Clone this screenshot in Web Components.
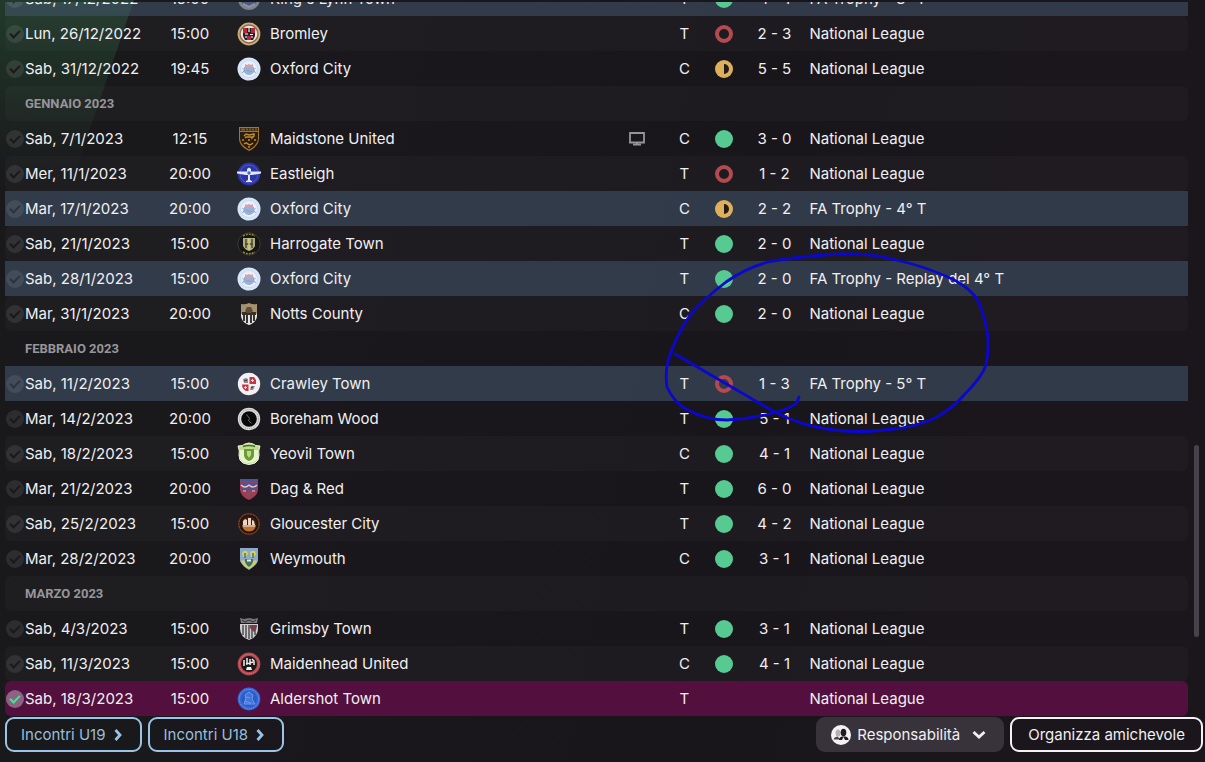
<!DOCTYPE html>
<html lang="it">
<head>
<meta charset="utf-8">
<meta name="viewport" content="width=device-width, initial-scale=1">
<title>Calendario</title>
<style>
html, body { height: 100%; }
body {
	margin: 0;
	background: #19171a;
	color: #f1eff1;
	font: 15px/20px Inter, "Liberation Sans", sans-serif;
}
</style>
</head>
<body>
<fixture-page>
	<fixture-list></fixture-list>
	<action-button slot="left" kind="link">Incontri U19</action-button>
	<action-button slot="left" kind="link">Incontri U18</action-button>
	<action-button slot="right" kind="menu">Responsabilità</action-button>
	<action-button slot="right" kind="outline">Organizza amichevole</action-button>
	<pen-note slot="note"></pen-note>
</fixture-page>

<script>
// date, time, club, badge, tv, venue, result, score, competition, row class
const FIXTURES = [
	["Sab, 17/12/2022", "15:00", "King's Lynn Town", "kings", 0, "T", "win", "4 - 1", "FA Trophy - 3° T", "cup"],
	["Lun, 26/12/2022", "15:00", "Bromley", "bromley", 0, "T", "loss", "2 - 3", "National League"],
	["Sab, 31/12/2022", "19:45", "Oxford City", "oxford", 0, "C", "draw", "5 - 5", "National League"],
	"GENNAIO 2023",
	["Sab, 7/1/2023", "12:15", "Maidstone United", "maidstone", 1, "C", "win", "3 - 0", "National League"],
	["Mer, 11/1/2023", "20:00", "Eastleigh", "eastleigh", 0, "T", "loss", "1 - 2", "National League"],
	["Mar, 17/1/2023", "20:00", "Oxford City", "oxford", 0, "C", "draw", "2 - 2", "FA Trophy - 4° T", "cup"],
	["Sab, 21/1/2023", "15:00", "Harrogate Town", "harrogate", 0, "T", "win", "2 - 0", "National League"],
	["Sab, 28/1/2023", "15:00", "Oxford City", "oxford", 0, "T", "win", "2 - 0", "FA Trophy - Replay del 4° T", "cup"],
	["Mar, 31/1/2023", "20:00", "Notts County", "notts", 0, "C", "win", "2 - 0", "National League"],
	"FEBBRAIO 2023",
	["Sab, 11/2/2023", "15:00", "Crawley Town", "crawley", 0, "T", "loss", "1 - 3", "FA Trophy - 5° T", "cup"],
	["Mar, 14/2/2023", "20:00", "Boreham Wood", "boreham", 0, "T", "win", "5 - 1", "National League"],
	["Sab, 18/2/2023", "15:00", "Yeovil Town", "yeovil", 0, "C", "win", "4 - 1", "National League"],
	["Mar, 21/2/2023", "20:00", "Dag & Red", "dagred", 0, "T", "win", "6 - 0", "National League"],
	["Sab, 25/2/2023", "15:00", "Gloucester City", "gloucester", 0, "T", "win", "4 - 2", "National League"],
	["Mar, 28/2/2023", "20:00", "Weymouth", "weymouth", 0, "C", "win", "3 - 1", "National League"],
	"MARZO 2023",
	["Sab, 4/3/2023", "15:00", "Grimsby Town", "grimsby", 0, "T", "win", "3 - 1", "National League"],
	["Sab, 11/3/2023", "15:00", "Maidenhead United", "maidenhead", 0, "C", "win", "4 - 1", "National League"],
	["Sab, 18/3/2023", "15:00", "Aldershot Town", "aldershot", 0, "T", "", "", "National League", "next"]
];

const SHIELD = "M3 2h18v10c0 5-4 9-9 11c-5-2-9-6-9-11z";

const BADGES = {
	kings: `<circle cx="12" cy="12" r="11" fill="#7d828f"/><circle cx="12" cy="12" r="8" fill="#4a5a86"/><path d="M6 17l6 3l6-3" stroke="#8f93a2" stroke-width="2" fill="none"/>`,
	bromley: `<circle cx="12" cy="12" r="11.400" fill="#cfae7c"/><circle cx="12" cy="12" r="9.700" fill="#8a6a4c"/><circle cx="12" cy="12" r="8.300" fill="#ece4e0"/><path d="M6 6h12v8l-2 4H8l-2-4z" fill="#2a2023"/><path d="M6 6h4v5H6zM14 6h4v5h-4zM10 14h4v4h-4z" fill="#b32838"/><path d="M11 7h2M12 8v2M8 12h3M13 12.500h3M8 15h2M14 15h2" stroke="#fff" stroke-width="1.200" fill="none"/>`,
	oxford: `<circle cx="12" cy="12" r="11.500" fill="#d9e6f8"/><circle cx="12" cy="12" r="8.600" fill="#e9f0fb" stroke="#c3d6ef" stroke-width=".8"/><path d="M7 10h10v5c-1 2-3 3-5 3s-4-1-5-3z" fill="#9bb1d3"/><path d="M8 7l2 1l2-1l2 1l2-1v4H8z" fill="#d3a1ae"/><path d="M5.500 11l2 2l-2 3M18.500 11l-2 2l2 3M9 14q1.500-1 3 0t3 0" stroke="#869fc6" fill="none"/>`,
	maidstone: `<path d="M2 0h20v11c0 6-4 10-10 13C6 21 2 17 2 11z" fill="#a97724"/><path d="M3 5h18v6c0 5-4 9-9 11.500C7 20 3 16 3 11z" fill="#281d10"/><path d="M3 1h18v3H3z" fill="#3b2a13"/><path d="M5 1.500v2M7 1.500v2M10 1.500v2M13 1.500v2M16 1.500v2M19 1.500v2" stroke="#c08a2b"/><path d="M7 9l2-2l3 1l5-1v2l-2 2v-1H9l-1 1M5 13h2M11 13h2M17 13h2M7 17q2-2 4 0t5-1M11 20h2" stroke="#c18b27" stroke-width="1.500" fill="none"/>`,
	eastleigh: `<circle cx="12" cy="12" r="11.400" fill="#2c35a8"/><circle cx="12" cy="12" r="9" fill="none" stroke="#5a62c8" stroke-width=".8"/><path d="M0 9.500h10V7l2-1.500L14 7v2.500h10v2l-9 1.500h-2v5l2 1v1H9v-1l2-1v-5H9l-9-1.500z" fill="#e3e8fa"/><circle cx="12" cy="11" r="1.700" fill="#4b68bd"/>`,
	harrogate: `<circle cx="12" cy="12" r="11.200" fill="#151611" stroke="#45463c" stroke-width=".8"/><path d="M6 4q6-3.500 12 0M6 20q6 3.500 12 0" stroke="#8a873b" stroke-width="1.500" stroke-dasharray="2 1" fill="none"/><path d="M6 6h12v8q-2 4-6 5q-4-1-6-5z" fill="#aeac8c"/><path d="M9 7v9M15 7v9M8 12h8" stroke="#4e4b2a" stroke-width="1.500"/><path d="M12 6v12" stroke="#d9cf5c" stroke-width="1.500"/>`,
	notts: `<path d="M4 2q4 1 8-1q4 2 8 1v10q0 8-8 11q-8-3-8-11z" fill="#a8926e"/><path d="M4 12h16v1q0 7-8 10q-8-3-8-10z" fill="#e6e3e0"/><path d="M7 13v6M10 13v8M14 13v8M17 13v6" stroke="#171717" stroke-width="1.700"/><path d="M5 10h14v3H5z" fill="#3a3028"/><path d="M8 9l2-4h4l2 4l-2 2h-4z" fill="#5e4d3a"/>`,
	crawley: `<circle cx="12" cy="12" r="11.200" fill="#f5f1f2"/><path d="M12.500 5H17l2 3v4h-6.500zM5 12.500h6.500V19H9q-4-2-4-6.500z" fill="#c43a48"/><path d="M6 7l3-1l2 1v4H7zM14 14h4l-2 4h-3z" fill="#8f8a92"/><path d="M14 8.500h3M15.500 7v3M7 15.500h3M8.500 14v3" stroke="#f3dfe2"/><path d="M7 9l3-1M14 16l2-1" stroke="#3b3540"/>`,
	boreham: `<circle cx="12" cy="12" r="11.200" fill="#dcdcdc"/><circle cx="12" cy="12" r="9.500" fill="none" stroke="#8f8f8f" stroke-dasharray="1 1"/><circle cx="12" cy="12" r="7.800" fill="#080809"/><path d="M9.500 7.500l3 4l-1 2l3 3" stroke="#6d6d6d" fill="none"/>`,
	yeovil: `<path d="M1 4q5 0 7-2q4-2 8 0q2 2 7 2q-2 5-1 9q0 6-4 8q-6 3-12 0q-4-2-4-8q1-4-1-9z" fill="#bddd8b" stroke="#eef5da"/><path d="M3 8h18v8q-2 5-9 5t-9-5z" fill="#eaf3cf"/><path d="M7 7h10v6q0 4-5 6q-5-2-5-6z" fill="#679c36"/><path d="M10 9h4v4l-2 3l-2-3z" fill="#c6d48c"/><path d="M6 4.500q6-2 12 0" stroke="#46722e" stroke-width="1.500" fill="none"/>`,
	dagred: `<path d="${SHIELD}" fill="#a33a50"/><path d="M3 3h18M4 6q4 4 8 0q4 4 8 0M4 10q4 5 8 1q4 4 8-1" stroke="#44599b" stroke-width="2" fill="none"/><path d="M4 8q4 4 8 0q4 4 8 0M6 14h3M15 14h3" stroke="#dfc6d2" stroke-width="1.200" fill="none"/><path d="M8 16l4-3l4 3l-4 6z" fill="#8a4a5c"/>`,
	gloucester: `<circle cx="12" cy="12" r="11" fill="#5c301b"/><circle cx="12" cy="12" r="10" fill="#27150f" stroke="#8a4d28" stroke-dasharray="2 1"/><circle cx="12" cy="12" r="7.500" fill="#3b1d14"/><path d="M5 13h14q-1 6.500-7 6.500T5 13z" fill="#c0702f"/><path d="M6 9l2-2l2 1v5H6zM11 6h3v7h-3zM15 8l2 1l1 4h-3z" fill="#ecd5c3"/><path d="M6 14h12" stroke="#f4ece4"/>`,
	weymouth: `<path d="M3 1h18v13q-2 5-9 9q-7-4-9-9z" fill="#8aa9c6"/><path d="M4 14q3-2 5 1q4-3 6 0q3-3 5-1q-2 5-8 8q-6-3-8-8z" fill="#d6cd62"/><path d="M5 6l2-2h3l1 3l-2 3H6zM13 6l1-2h4l1 3l-2 3h-3z" fill="#d6d062"/><path d="M8 6v5M16 6v5" stroke="#4c6c77" stroke-width="1.500"/><path d="M8 12h8v3q-1 3-4 5q-3-2-4-5z" fill="#3d7668"/><path d="M10 13.500h4" stroke="#eee" stroke-width="2"/>`,
	grimsby: `<path d="M3 1l4 1l5-1l5 1l4-1l-1 5H4z" fill="#77777c"/><path d="M5 3l3 2l4-2l4 2l3-2" stroke="#313136" fill="none"/><path d="M3 7h18v4q0 9-9 12q-9-3-9-12z" fill="#cfced0"/><path d="M6 8v10M9 8v13M12 8v14M15 8v13M18 8v10" stroke="#3b3b41" stroke-width="1.300"/><path d="M13 8h7q0 5-3 7l-4-4z" fill="#74404a"/>`,
	maidenhead: `<circle cx="12" cy="12" r="11.400" fill="#b44750"/><circle cx="12" cy="12" r="9.700" fill="none" stroke="#d58087" stroke-dasharray="1 1"/><circle cx="12" cy="12" r="8" fill="#1c181a"/><path d="M7 8v6M10 6v7M13 7v6M15 7l2 2v4M9 12l7-2" stroke="#eee" stroke-width="1.500" fill="none"/><path d="M9 18l1-3h4l1 3z" fill="#f2eeee"/>`,
	aldershot: `<circle cx="12" cy="12" r="11.400" fill="#3567d4"/><circle cx="12" cy="12" r="9.700" fill="none" stroke="#7ea4ee" stroke-dasharray="1 1"/><circle cx="12" cy="12" r="7.800" fill="#2b5bc6"/><path d="M7 17l2-6l-1-3l4-3l4 3l-1 4l3 5zM9 10l4 1M8 14l6 2" stroke="#7198ea" fill="#4374d8"/>`
};

const RESULTS = {
	win: ["Vittoria", `<circle cx="10" cy="10" r="9" fill="#56ca91"/>`],
	draw: ["Pareggio", `<circle cx="10" cy="10" r="9" fill="#dfb05b"/><path d="M10 5a5 5 0 0 1 0 10z" fill="#221c18"/>`],
	loss: ["Sconfitta", `<circle cx="10" cy="10" r="7" fill="none" stroke="#b24a50" stroke-width="4"/>`]
};

class FixturePage extends HTMLElement {
	constructor() {
		super();
		this.attachShadow({mode:"open"}).innerHTML = `
<style>
:host {
	display: flex;
	flex-direction: column;
	box-sizing: border-box;
	height: 100vh;
	padding-top: 2px;
	position: relative;
	isolation: isolate;
	overflow: hidden;
	background: linear-gradient(100deg, #19191b, #19161b 60%, #1b161c);
}
/* green light falling in from the corner */
:host::before {
	content: "";
	position: absolute;
	z-index: -1;
	inset: 0 auto auto 0;
	width: 134px;
	height: 180px;
	clip-path: polygon(0 0, 100% 0, 54% 100%, 0 100%);
	background: linear-gradient(rgb(50 130 76 / .32), rgb(50 130 76 / .12) 60%, transparent);
}
main {
	flex: 1;
	min-height: 0;
	display: flex;
}
.rows {
	flex: 1;
	min-width: 0;
	display: flex;
	flex-direction: column;
	justify-content: flex-end;
	overflow: hidden;
	padding-left: 5px;
}
.rail {
	width: 17px;
	display: flex;
	flex-direction: column;
	align-items: center;
}
.rail::before { content: ""; flex: 62; }
.rail::after { content: ""; flex: 11; }
.thumb {
	flex: 27;
	width: 5px;
	border-radius: 3px;
	background: #48434a;
}
footer {
	display: flex;
	justify-content: space-between;
	padding: 1px 2px 10px 5px;
}
nav { display: flex; gap: 6px; }
</style>
<main>
	<div class="rows"><slot></slot></div>
	<div class="rail"><div class="thumb"></div></div>
</main>
<footer>
	<nav><slot name="left"></slot></nav>
	<nav><slot name="right"></slot></nav>
</footer>
<slot name="note"></slot>`;
	}
}

class FixtureList extends HTMLElement {
	constructor() {
		super();
		this.attachShadow({mode:"open"}).innerHTML = `
<style>
:host { display: block; }
table {
	width: 100%;
	table-layout: fixed;
	border-collapse: collapse;
}
tr { height: 35px; }
tr:nth-child(even) { background: rgb(255 255 255 / .025); }
tr.cup { background: rgb(70 90 111 / .55); }
tr.next { background: #530f3e; }
tr:nth-child(even), tr.next { clip-path: inset(0 round 6px); }
tr.cup { clip-path: none; }
td, th {
	padding: 0;
	text-align: left;
	white-space: nowrap;
	font-weight: normal;
}
th {
	padding-left: 20px;
	color: #98959a;
	font: bold 13px/20px Roboto, sans-serif;
}
.center { text-align: center; }
.badge { padding-left: 17px; }
club-badge, result-mark, svg { display: block; }
result-mark, svg { margin: 0 auto; }
input {
	appearance: none;
	display: block;
	box-sizing: border-box;
	width: 18px;
	height: 18px;
	margin: 0 0 0 1px;
	padding-top: 5px;
	border-radius: 50%;
	background: rgb(255 255 255 / .09);
}
input::after {
	content: "";
	display: block;
	box-sizing: border-box;
	width: 10px;
	height: 6px;
	margin-left: 4px;
	border: solid #1b191c;
	border-width: 0 0 2px 2px;
	transform: rotate(-45deg);
}
.cup input::after { border-color: #2b343f; }
input:checked { background: #8c6384; }
input:checked::after { border-color: #52dc96; }
</style>
<table>
	<colgroup>
		<col style="width:20px"><col style="width:135px"><col style="width:60px"><col style="width:50px">
		<col><col style="width:44px"><col style="width:50px"><col style="width:30px"><col style="width:70px"><col style="width:32%">
	</colgroup>
	<tbody>${FIXTURES.map(f => typeof f == "string" ? monthRow(f) : fixtureRow(f)).join("")}</tbody>
</table>`;
	}
}

class ClubBadge extends HTMLElement {
	connectedCallback() {
		this.attachShadow({mode:"open"}).innerHTML = `
<style>
:host { display: block; }
svg { display: block; width: 24px; height: 24px; }
</style>
<svg viewBox="0 0 24 24" aria-hidden="true">${BADGES[this.getAttribute("club")]}</svg>`;
	}
}

class ResultMark extends HTMLElement {
	connectedCallback() {
		let [label, shape] = RESULTS[this.getAttribute("result")];
		this.attachShadow({mode:"open"}).innerHTML = `
<style>
:host { display: block; width: 20px; }
svg { display: block; width: 20px; height: 20px; }
</style>
<svg viewBox="0 0 20 20" role="img" aria-label="${label}">${shape}</svg>`;
	}
}

class ActionButton extends HTMLElement {
	connectedCallback() {
		let kind = this.getAttribute("kind");
		this.attachShadow({mode:"open"}).innerHTML = `
<style>
:host { display: block; }
button {
	display: flex;
	align-items: center;
	box-sizing: border-box;
	height: 35px;
	padding: 0 16px;
	border: 2px solid #f5f1f4;
	border-radius: 9px;
	background: none;
	color: #f1eff1;
	font: inherit;
	white-space: nowrap;
	cursor: pointer;
}
.link {
	gap: 8px;
	padding: 0 18px 0 14px;
	border-color: #9ac4e8;
	color: #98bfdd;
}
.menu {
	gap: 6px;
	padding: 0 16px 0 13px;
	border-color: #38333a;
	background: #38333a;
}
svg { display: block; }
.menu svg:last-child { margin-left: 6px; }
</style>
<button class="${kind}" type="button" ${kind == "menu" ? `aria-haspopup="menu"` : ""}>
	${kind == "menu" ? PEOPLE : ""}<slot></slot>${kind == "link" ? CHEVRON_RIGHT : kind == "menu" ? CHEVRON_DOWN : ""}
</button>`;
	}
}

class PenNote extends HTMLElement {
	constructor() {
		super();
		// freehand ring drawn over the table
		this.attachShadow({mode:"open"}).innerHTML = `
<style>
:host {
	display: block;
	position: absolute;
	left: 660px;
	top: 250px;
	pointer-events: none;
}
svg { display: block; }
</style>
<svg width="332" height="186" viewBox="660 250 332 186" fill="none" stroke="#0b07cf" stroke-width="2.800" stroke-linecap="round" stroke-linejoin="round" aria-hidden="true">
	<path d="M675 354L773 411Q803 427 834 430Q859 433 885 430Q914 428 935 418Q952 409 965 394Q982 377 986 365Q991 340 984 318Q980 302 974 295Q964 284 950 278Q924 266 896 260Q872 253 840 254Q801 256 773 261Q749 266 726 282Q706 297 690 315Q674 340 668 361Q665 374 667 387Q673 400 684 408Q705 420 727 420Q752 419 777 412Q794 407 797 402L799 397"/>
</svg>`;
	}
}

const TV = `<svg width="16" height="14" viewBox="0 0 16 14" fill="none" stroke="#96949a" stroke-width="1.800" role="img" aria-label="In TV"><path d="M1 1h14v9.500H1z"/><path d="M8 10v2M4 12.500h8" stroke-width="2"/></svg>`;
const CHEVRON_RIGHT = `<svg width="8" height="12" viewBox="0 0 8 12" fill="none" stroke="#98c3e8" stroke-width="2.800" aria-hidden="true"><path d="M1.500 1l4.500 5l-4.500 5"/></svg>`;
const CHEVRON_DOWN = `<svg width="14" height="10" viewBox="0 0 14 10" fill="none" stroke="#f1eff1" stroke-width="2.800" aria-hidden="true"><path d="M1.500 2l5.500 5l5.500-5"/></svg>`;
const PEOPLE = `<svg width="20" height="20" viewBox="0 0 20 20" aria-hidden="true">
	<circle cx="10" cy="10" r="10" fill="#f5f2f5"/>
	<ellipse cx="7" cy="8" rx="2.500" ry="3.500" fill="#b5b0b5"/>
	<path d="M2.500 14.500q.5-2.500 4-3l3 3z" fill="#4a464b"/>
	<ellipse cx="12.500" cy="7.500" rx="2.800" ry="3.800" fill="#1f1b20"/>
	<path d="M8 15q0-3 3-3.500h3.500q3 .5 3 3.500z" fill="#1f1b20"/>
	<path d="M12.500 12l-1.500 3h3z" fill="#f5f2f5"/>
</svg>`;

function monthRow(label) {
	return `<tr><th colspan="10" scope="rowgroup">${label}</th></tr>`;
}

function fixtureRow([date, time, club, badge, tv, venue, result, score, competition, cls = ""]) {
	return `<tr class="${cls}">
	<td><input type="checkbox" aria-label="${date}" ${cls == "next" ? "checked" : ""}></td>
	<td>${date}</td>
	<td class="center">${time}</td>
	<td class="badge"><club-badge club="${badge}"></club-badge></td>
	<td>${club.replace("&", "&amp;")}</td>
	<td>${tv ? TV : ""}</td>
	<td class="center">${venue}</td>
	<td>${result ? `<result-mark result="${result}"></result-mark>` : ""}</td>
	<td class="center">${score}</td>
	<td>${competition}</td>
</tr>`;
}

customElements.define("club-badge", ClubBadge);
customElements.define("result-mark", ResultMark);
customElements.define("action-button", ActionButton);
customElements.define("pen-note", PenNote);
customElements.define("fixture-list", FixtureList);
customElements.define("fixture-page", FixturePage);
</script>
</body>
</html>
